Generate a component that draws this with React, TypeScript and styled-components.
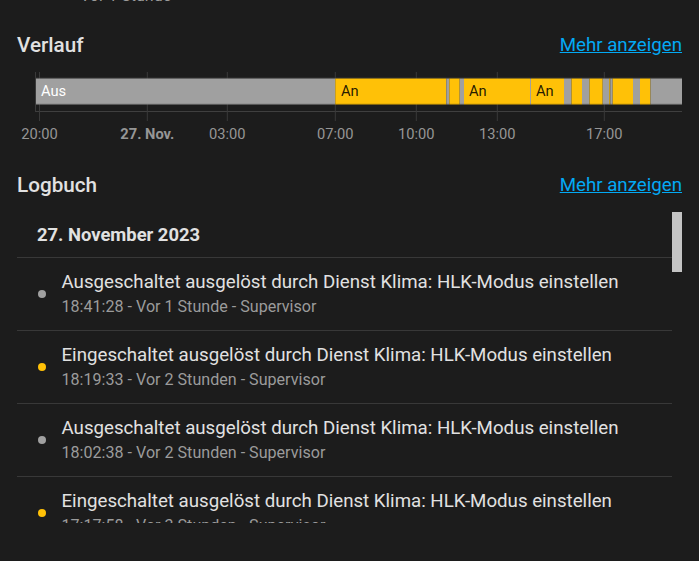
import styled, { createGlobalStyle } from "styled-components";

const GlobalStyle = createGlobalStyle`
  html, body {
    margin: 0;
    padding: 0;
    background: #1c1c1c;
    overflow: hidden;
  }
  body {
    font-family: Roboto, "Noto Sans", sans-serif;
    color: #e1e1e1;
  }
`;

const GRAY = "#a0a0a0";
const YELLOW = "#ffc107";

const Page = styled.div`
  height: 561px;
  padding: 0 17px;
  box-sizing: border-box;
  overflow: hidden;
`;

const StatusText = styled.div`
  margin-top: -14px;
  padding-left: 63px;
  font-size: 16px;
  line-height: 20px;
  color: #9b9b9b;
`;

const SectionHeader = styled.div<{ $top: number }>`
  display: flex;
  justify-content: space-between;
  align-items: center;
  height: 32px;
  margin-top: ${(p) => p.$top}px;
`;

const Title = styled.h2`
  margin: 0;
  font-size: 20.7px;
  font-weight: 500;
  color: #e1e1e1;
`;

const MoreLink = styled.a`
  font-size: 18.7px;
  color: #03a9f4;
  text-decoration: underline;
  cursor: pointer;
`;

const Chart = styled.svg`
  display: block;
  margin-top: 1px;
  font-family: Roboto, sans-serif;
`;

const LogFrame = styled.div`
  position: relative;
  margin-top: 11px;
  height: 311px;
`;

const LogScroll = styled.div`
  height: 100%;
  padding-right: 10px;
  overflow-y: auto;
  scrollbar-width: none;

  &::-webkit-scrollbar {
    display: none;
  }
`;

const ScrollThumb = styled.div`
  position: absolute;
  top: 0;
  right: 0;
  width: 10px;
  height: 60px;
  background: #c4c4c4;
`;

const DateHeader = styled.div`
  padding: 11px 20px 10px;
  font-size: 18.4px;
  line-height: 24px;
  font-weight: 700;
  color: #e1e1e1;
  border-bottom: 1px solid #383838;
`;

const Entry = styled.div`
  display: flex;
  align-items: center;
  gap: 16px;
  padding: 12px 0 12px 20.5px;
  border-bottom: 1px solid #383838;
`;

const Dot = styled.span<{ $color: string }>`
  flex-shrink: 0;
  width: 8px;
  height: 8px;
  border-radius: 50%;
  background: ${(p) => p.$color};
`;

const EntryBody = styled.div`
  display: flex;
  flex-direction: column;
  white-space: nowrap;
`;

const Message = styled.div`
  font-size: 18.7px;
  line-height: 24px;
  color: #e1e1e1;
`;

const Meta = styled.div`
  margin-top: 2px;
  font-size: 16.1px;
  line-height: 22px;
  color: #9b9b9b;
`;

// [start, end, on]
const segments: [number, number, boolean][] = [
  [36, 335.3, false],
  [335.3, 446.3, true],
  [446.3, 449.3, false],
  [449.3, 459.7, true],
  [459.7, 464, false],
  [464, 530, true],
  [530, 531, false],
  [531, 564, true],
  [564, 571.5, false],
  [571.5, 582, true],
  [582, 589.5, false],
  [589.5, 602.7, true],
  [602.7, 609.3, false],
  [609.3, 610.3, true],
  [610.3, 612.7, false],
  [612.7, 633, true],
  [633, 640, false],
  [640, 650.5, true],
  [650.5, 682, false],
];

const labels: [number, string, boolean][] = [
  [41, "Aus", false],
  [341, "An", true],
  [469, "An", true],
  [536, "An", true],
];

const ticks: [number, string, boolean][] = [
  [39.5, "20:00", false],
  [147.3, "27. Nov.", true],
  [227.3, "03:00", false],
  [335.3, "07:00", false],
  [416.3, "10:00", false],
  [497.3, "13:00", false],
  [604.3, "17:00", false],
];

const OFF = "Ausgeschaltet ausgelöst durch Dienst Klima: HLK-Modus einstellen";
const ON = "Eingeschaltet ausgelöst durch Dienst Klima: HLK-Modus einstellen";

const entries = [
  { on: false, time: "18:41:28", ago: "Vor 1 Stunde" },
  { on: true, time: "18:19:33", ago: "Vor 2 Stunden" },
  { on: false, time: "18:02:38", ago: "Vor 2 Stunden" },
  { on: true, time: "17:17:58", ago: "Vor 3 Stunden" },
  { on: false, time: "17:04:12", ago: "Vor 3 Stunden" },
  { on: true, time: "16:48:51", ago: "Vor 3 Stunden" },
  { on: false, time: "16:31:07", ago: "Vor 3 Stunden" },
  { on: true, time: "16:02:44", ago: "Vor 4 Stunden" },
  { on: false, time: "15:47:19", ago: "Vor 4 Stunden" },
  { on: true, time: "15:26:03", ago: "Vor 4 Stunden" },
  { on: false, time: "15:12:36", ago: "Vor 4 Stunden" },
  { on: true, time: "14:40:55", ago: "Vor 5 Stunden" },
  { on: false, time: "14:21:48", ago: "Vor 5 Stunden" },
  { on: true, time: "13:55:10", ago: "Vor 5 Stunden" },
  { on: false, time: "13:01:27", ago: "Vor 6 Stunden" },
  { on: true, time: "12:12:42", ago: "Vor 7 Stunden" },
  { on: false, time: "11:48:05", ago: "Vor 7 Stunden" },
  { on: true, time: "11:41:30", ago: "Vor 7 Stunden" },
  { on: false, time: "11:20:16", ago: "Vor 8 Stunden" },
  { on: true, time: "07:00:02", ago: "Vor 12 Stunden" },
  { on: false, time: "19:52:11", ago: "Vor 23 Stunden" },
];

function HistoryChart() {
  return (
    <Chart width={665} height={88} viewBox="17 62 665 88">
      <line x1={35.5} y1={72} x2={35.5} y2={112} stroke="#3a3a3a" />
      <line x1={35.5} y1={78} x2={682} y2={78} stroke="#333" />
      <line x1={35.5} y1={111.5} x2={682} y2={111.5} stroke="#3f3f3f" />
      {ticks.map(([x]) => (
        <line key={x} x1={x} y1={72} x2={x} y2={121} stroke="#3a3a3a" />
      ))}
      {segments.map(([a, b, on]) => (
        <rect key={a} x={a} y={78.5} width={b - a} height={26} fill={on ? YELLOW : GRAY} />
      ))}
      <line x1={36} y1={104} x2={682} y2={104} stroke="rgba(0,0,0,0.15)" />
      {labels.map(([x, t, on]) => (
        <text key={x} x={x} y={96.3} fontSize={14.7} fill={on ? "rgba(0,0,0,0.87)" : "#fff"}>
          {t}
        </text>
      ))}
      {ticks.map(([x, t, bold]) => (
        <text
          key={t}
          x={x}
          y={139}
          fontSize={14.7}
          fontWeight={bold ? 700 : 400}
          textAnchor="middle"
          fill="#969696"
        >
          {t}
        </text>
      ))}
    </Chart>
  );
}

export default function App() {
  return (
    <>
      <GlobalStyle />
      <Page>
        <StatusText>Vor 1 Stunde</StatusText>
        <SectionHeader $top={23}>
          <Title>Verlauf</Title>
          <MoreLink>Mehr anzeigen</MoreLink>
        </SectionHeader>
        <HistoryChart />
        <SectionHeader $top={19}>
          <Title>Logbuch</Title>
          <MoreLink>Mehr anzeigen</MoreLink>
        </SectionHeader>
        <LogFrame>
          <LogScroll>
            <DateHeader>27. November 2023</DateHeader>
            {entries.map((e) => (
              <Entry key={e.time}>
                <Dot $color={e.on ? YELLOW : GRAY} />
                <EntryBody>
                  <Message>{e.on ? ON : OFF}</Message>
                  <Meta>
                    {e.time} - {e.ago} - Supervisor
                  </Meta>
                </EntryBody>
              </Entry>
            ))}
          </LogScroll>
          <ScrollThumb />
        </LogFrame>
      </Page>
    </>
  );
}
